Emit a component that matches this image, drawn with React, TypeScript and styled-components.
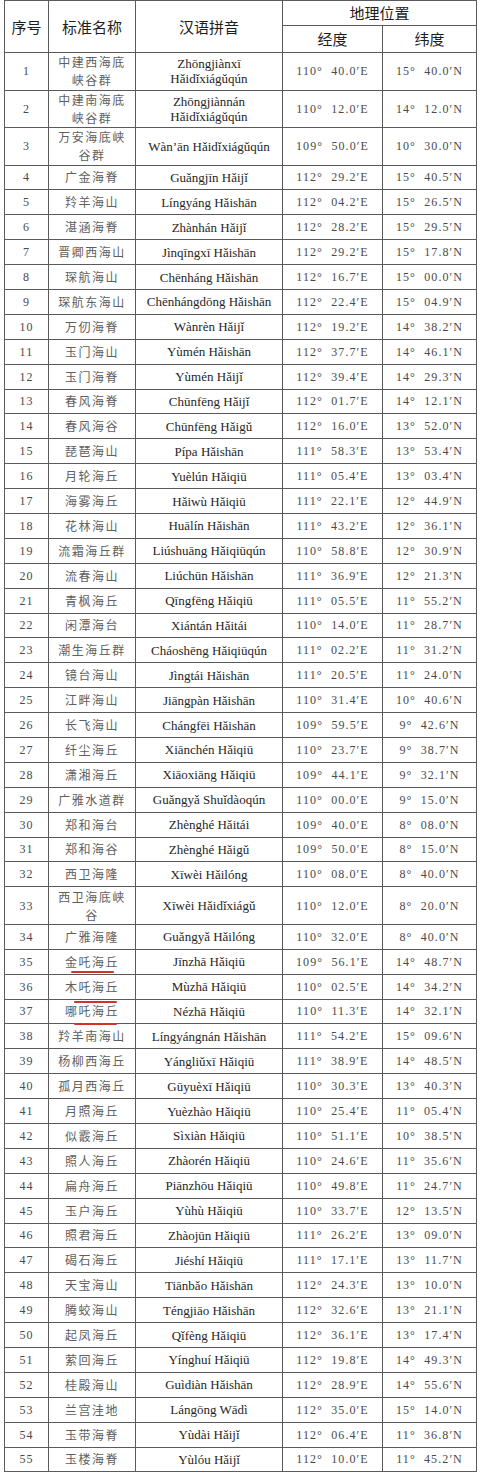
import styled, { createGlobalStyle } from "styled-components";

// name / pinyin use "\n" where the document breaks the line
const rows: [string, string, string, string][] = [
  ["中建西海底\n峡谷群", "Zhōngjiànxī\nHǎidǐxiágǔqún", "110°  40.0′E", "15°  40.0′N"],
  ["中建南海底\n峡谷群", "Zhōngjiànnán\nHǎidǐxiágǔqún", "110°  12.0′E", "14°  12.0′N"],
  ["万安海底峡\n谷群", "Wàn’ān Hǎidǐxiágǔqún", "109°  50.0′E", "10°  30.0′N"],
  ["广金海脊", "Guǎngjīn Hǎijǐ", "112°  29.2′E", "15°  40.5′N"],
  ["羚羊海山", "Língyáng Hǎishān", "112°  04.2′E", "15°  26.5′N"],
  ["湛涵海脊", "Zhànhán Hǎijǐ", "112°  28.2′E", "15°  29.5′N"],
  ["晋卿西海山", "Jìnqīngxī Hǎishān", "112°  29.2′E", "15°  17.8′N"],
  ["琛航海山", "Chēnháng Hǎishān", "112°  16.7′E", "15°  00.0′N"],
  ["琛航东海山", "Chēnhángdōng Hǎishān", "112°  22.4′E", "15°  04.9′N"],
  ["万仞海脊", "Wànrèn Hǎijǐ", "112°  19.2′E", "14°  38.2′N"],
  ["玉门海山", "Yùmén Hǎishān", "112°  37.7′E", "14°  46.1′N"],
  ["玉门海脊", "Yùmén Hǎijǐ", "112°  39.4′E", "14°  29.3′N"],
  ["春风海脊", "Chūnfēng Hǎijǐ", "112°  01.7′E", "14°  12.1′N"],
  ["春风海谷", "Chūnfēng Hǎigǔ", "112°  16.0′E", "13°  52.0′N"],
  ["琵琶海山", "Pípa Hǎishān", "111°  58.3′E", "13°  53.4′N"],
  ["月轮海丘", "Yuèlún Hǎiqiū", "111°  05.4′E", "13°  03.4′N"],
  ["海雾海丘", "Hǎiwù Hǎiqiū", "111°  22.1′E", "12°  44.9′N"],
  ["花林海山", "Huālín Hǎishān", "111°  43.2′E", "12°  36.1′N"],
  ["流霜海丘群", "Liúshuāng Hǎiqiūqún", "110°  58.8′E", "12°  30.9′N"],
  ["流春海山", "Liúchūn Hǎishān", "111°  36.9′E", "12°  21.3′N"],
  ["青枫海丘", "Qīngfēng Hǎiqiū", "111°  05.5′E", "11°  55.2′N"],
  ["闲潭海台", "Xiántán Hǎitái", "110°  14.0′E", "11°  28.7′N"],
  ["潮生海丘群", "Cháoshēng Hǎiqiūqún", "111°  02.2′E", "11°  31.2′N"],
  ["镜台海山", "Jìngtái Hǎishān", "111°  20.5′E", "11°  24.0′N"],
  ["江畔海山", "Jiāngpàn Hǎishān", "110°  31.4′E", "10°  40.6′N"],
  ["长飞海山", "Chángfēi Hǎishān", "109°  59.5′E", "9°  42.6′N"],
  ["纤尘海丘", "Xiānchén Hǎiqiū", "110°  23.7′E", "9°  38.7′N"],
  ["潇湘海丘", "Xiāoxiāng Hǎiqiū", "109°  44.1′E", "9°  32.1′N"],
  ["广雅水道群", "Guǎngyǎ Shuǐdàoqún", "110°  00.0′E", "9°  15.0′N"],
  ["郑和海台", "Zhènghé Hǎitái", "109°  40.0′E", "8°  08.0′N"],
  ["郑和海谷", "Zhènghé Hǎigǔ", "109°  50.0′E", "8°  15.0′N"],
  ["西卫海隆", "Xīwèi Hǎilóng", "110°  08.0′E", "8°  40.0′N"],
  ["西卫海底峡\n谷", "Xīwèi Hǎidǐxiágǔ", "110°  12.0′E", "8°  20.0′N"],
  ["广雅海隆", "Guǎngyǎ Hǎilóng", "110°  32.0′E", "8°  40.0′N"],
  ["金吒海丘", "Jīnzhā Hǎiqiū", "109°  56.1′E", "14°  48.7′N"],
  ["木吒海丘", "Mùzhā Hǎiqiū", "110°  02.5′E", "14°  34.2′N"],
  ["哪吒海丘", "Nézhā Hǎiqiū", "110°  11.3′E", "14°  32.1′N"],
  ["羚羊南海山", "Língyángnán Hǎishān", "111°  54.2′E", "15°  09.6′N"],
  ["杨柳西海丘", "Yángliǔxī Hǎiqiū", "111°  38.9′E", "14°  48.5′N"],
  ["孤月西海丘", "Gūyuèxī Hǎiqiū", "110°  30.3′E", "13°  40.3′N"],
  ["月照海丘", "Yuèzhào Hǎiqiū", "110°  25.4′E", "11°  05.4′N"],
  ["似霰海丘", "Sìxiàn Hǎiqiū", "110°  51.1′E", "10°  38.5′N"],
  ["照人海丘", "Zhàorén Hǎiqiū", "110°  24.6′E", "11°  35.6′N"],
  ["扁舟海丘", "Piānzhōu Hǎiqiū", "110°  49.8′E", "11°  24.7′N"],
  ["玉户海丘", "Yùhù Hǎiqiū", "110°  33.7′E", "12°  13.5′N"],
  ["照君海丘", "Zhàojūn Hǎiqiū", "111°  26.2′E", "13°  09.0′N"],
  ["碣石海丘", "Jiéshí Hǎiqiū", "111°  17.1′E", "13°  11.7′N"],
  ["天宝海山", "Tiānbǎo Hǎishān", "112°  24.3′E", "13°  10.0′N"],
  ["腾蛟海山", "Téngjiāo Hǎishān", "112°  32.6′E", "13°  21.1′N"],
  ["起凤海丘", "Qǐfèng Hǎiqiū", "112°  36.1′E", "13°  17.4′N"],
  ["萦回海丘", "Yínghuí Hǎiqiū", "112°  19.8′E", "14°  49.3′N"],
  ["桂殿海山", "Guìdiàn Hǎishān", "112°  28.9′E", "14°  55.6′N"],
  ["兰宫洼地", "Lángōng Wādì", "112°  35.0′E", "15°  14.0′N"],
  ["玉带海脊", "Yùdài Hǎijǐ", "112°  06.4′E", "11°  36.8′N"],
  ["玉楼海脊", "Yùlóu Hǎijǐ", "112°  10.0′E", "11°  45.2′N"],
];

// red pen marks under some names (row number -> offset inside the name cell)
const marks: Record<number, { top: number; left: number }> = {
  35: { top: 21, left: 22 },
  36: { top: 26, left: 25 },
  37: { top: 23, left: 25 },
};

export default function App() {
  return (
    <>
      <GlobalStyle />
      <Page>
        <Table>
          <colgroup>
            <col style={{ width: 44 }} />
            <col style={{ width: 87 }} />
            <col style={{ width: 147 }} />
            <col style={{ width: 100 }} />
            <col style={{ width: 94 }} />
          </colgroup>
          <thead>
            <tr>
              <HeadCell rowSpan={2}>序号</HeadCell>
              <HeadCell rowSpan={2}>标准名称</HeadCell>
              <HeadCell rowSpan={2}>汉语拼音</HeadCell>
              <HeadCell colSpan={2} $h={24}>
                地理位置
              </HeadCell>
            </tr>
            <tr>
              <HeadCell $h={26}>经度</HeadCell>
              <HeadCell $h={26}>纬度</HeadCell>
            </tr>
          </thead>
          <tbody>
            {rows.map(([name, pinyin, lon, lat], i) => {
              const no = i + 1;
              const tall = name.includes("\n");
              const mark = marks[no];
              return (
                <BodyRow key={no} $tall={tall}>
                  <NumCell>{no}</NumCell>
                  <NameCell>
                    {name}
                    {mark && <PenMark $top={mark.top} $left={mark.left} />}
                  </NameCell>
                  <PinyinCell>{pinyin}</PinyinCell>
                  <NumCell>{lon}</NumCell>
                  <NumCell>{lat}</NumCell>
                </BodyRow>
              );
            })}
          </tbody>
        </Table>
      </Page>
    </>
  );
}

const GlobalStyle = createGlobalStyle`
  html, body {
    margin: 0;
    padding: 0;
    background: #ffffff;
  }
`;

const Page = styled.div`
  width: 480px;
  padding: 0 4px;
  box-sizing: border-box;
`;

const Table = styled.table`
  width: 472px;
  table-layout: fixed;
  border-collapse: collapse;
  border: 1px solid #5a5a5a;
`;

const HeadCell = styled.th<{ $h?: number }>`
  height: ${(p) => (p.$h ? `${p.$h}px` : "auto")};
  padding: 0;
  border: 1px solid #5a5a5a;
  font-family: "Noto Sans CJK SC", sans-serif;
  font-weight: 400;
  font-size: 15px;
  line-height: 18px;
  color: #1e1e1e;
  text-align: center;
  vertical-align: middle;
`;

const BodyRow = styled.tr<{ $tall: boolean }>`
  height: ${(p) => (p.$tall ? "37.5px" : "24.9px")};
`;

const Cell = styled.td`
  padding: 0;
  border: 1px solid #5a5a5a;
  text-align: center;
  vertical-align: middle;
  white-space: pre-line;
`;

const NumCell = styled(Cell)`
  font-family: "Liberation Serif", serif;
  font-size: 12px;
  letter-spacing: 1.1px;
  line-height: 16px;
  color: #4a4a4a;
  white-space: pre;
`;

const NameCell = styled(Cell)`
  position: relative;
  font-family: "Noto Sans CJK SC", sans-serif;
  font-weight: 400;
  font-size: 12px;
  letter-spacing: 1.5px;
  line-height: 18px;
  color: #606060;
`;

const PinyinCell = styled(Cell)`
  font-family: "Liberation Serif", serif;
  font-size: 13px;
  line-height: 15px;
  color: #262626;
`;

const PenMark = styled.span<{ $top: number; $left: number }>`
  position: absolute;
  top: ${(p) => p.$top}px;
  left: ${(p) => p.$left}px;
  width: 43px;
  height: 2px;
  border-radius: 1px;
  background: #d2322c;
`;
